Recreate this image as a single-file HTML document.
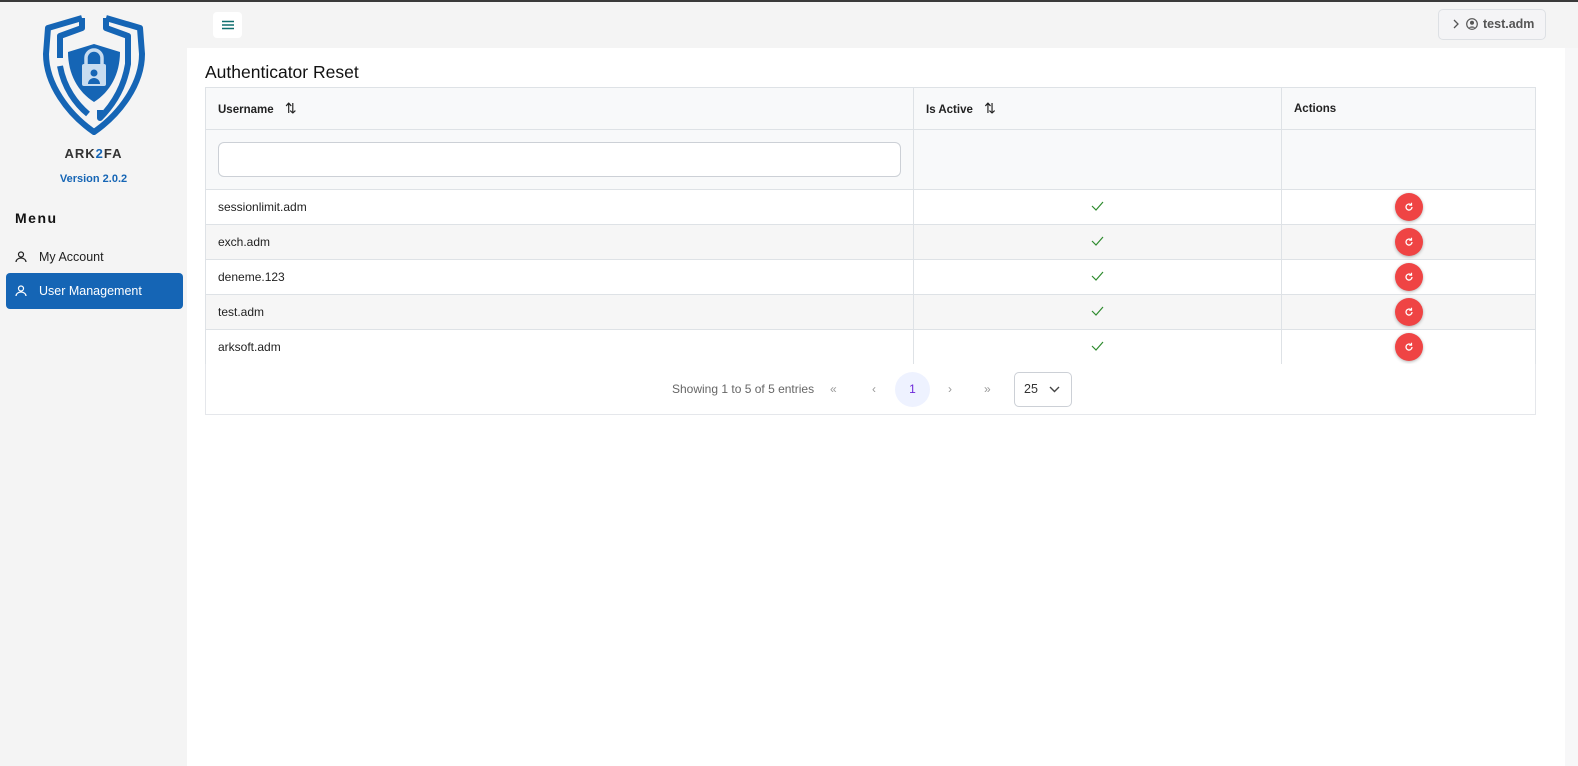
<!DOCTYPE html>
<html><head><meta charset="utf-8"><style>
*{box-sizing:border-box;margin:0;padding:0}
body{width:1578px;height:766px;overflow:hidden;background:#f4f4f4;font-family:"Liberation Sans",sans-serif;font-size:13px;color:#222;position:relative}
.topline{position:absolute;left:0;top:0;width:1578px;height:2px;background:#3a3a3a}
.side{position:absolute;left:0;top:2px;width:187px;height:764px;background:#f4f4f4}
.main{position:absolute;left:187px;top:48px;width:1378px;height:718px;background:#fff}
.rstripe{position:absolute;left:1565px;top:48px;width:13px;height:718px;background:#f7f7f8}
.menu-item{position:absolute;left:6px;width:177px;height:36px;border-radius:4px;display:flex;align-items:center;padding-left:9px;font-size:12.5px}
.menu-item svg{margin-right:12px}
table{position:absolute;left:205px;top:87px;width:1331px;border-collapse:collapse;font-size:12px}
td,th{border:1px solid #dee2e6;padding:0 12px;text-align:left}
th{background:#f8f9fa;height:42px;font-weight:bold;font-size:11.5px}
.filter td{background:#f8f9fa;height:60px}
.r td{height:35px;background:#fff}
.r:nth-child(even) td{background:#f6f6f6}
.c{text-align:center}
.btn{display:inline-block;width:28px;height:28px;border-radius:50%;background:#ef4444;vertical-align:middle;box-shadow:0 1px 3px rgba(0,0,0,.3);position:relative}
.btn svg{position:absolute;left:8px;top:8px}
.foot{position:absolute;left:205px;top:364px;width:1331px;height:51px;border:1px solid #e5e7eb;border-top:none;background:#fff}
.pg{position:absolute;top:8px;height:35px;line-height:35px;font-size:12px;color:#999}
</style></head><body>
<div class="topline"></div>
<div class="side">
<svg style="position:absolute;left:38px;top:12px" width="112" height="124" viewBox="0 0 112 124">
<g fill="none" stroke="#1565b5" stroke-width="6" stroke-linejoin="round">
<path d="M44 4 L10 14 L8 40 C8 70 30 100 56 118 C82 100 104 70 104 40 L102 14 L68 4"/>
<path d="M44 4 L44 14 L22 22 L22 44"/>
<path d="M68 4 L68 14 L90 22 L90 50 C86 74 74 92 62 104 L62 96"/>
<path d="M22 52 C26 74 38 90 50 100"/>
</g>
<path d="M30 38 L56 30 L82 38 C82 60 72 78 56 88 C40 78 30 60 30 38Z" fill="#1565b5"/>
<rect x="44" y="50" width="24" height="22" rx="2" fill="#c7dcf0"/>
<path d="M48 50 V44 a8 8 0 0 1 16 0 V50" fill="none" stroke="#c7dcf0" stroke-width="3.5"/>
<circle cx="56" cy="59" r="3.5" fill="#1565b5"/><path d="M50 70 a6 6 0 0 1 12 0z" fill="#1565b5"/>
</svg>
<div style="position:absolute;left:0;width:187px;top:144px;text-align:center;font-weight:bold;font-size:13px;letter-spacing:1px;color:#333">ARK<span style="color:#1565b5">2</span>FA</div>
<div style="position:absolute;left:0;width:187px;top:171px;text-align:center;font-weight:bold;font-size:11px;color:#1565b5">Version 2.0.2</div>
<div style="position:absolute;left:15px;top:208px;font-weight:bold;font-size:14px;letter-spacing:1.5px;color:#111">Menu</div>
<div class="menu-item" style="top:237px;color:#222"><svg width="12" height="12" viewBox="0 0 12 12" fill="none" stroke="#222" stroke-width="1.2"><circle cx="6" cy="3.5" r="2.5"/><path d="M1 11 a5 4 0 0 1 10 0"/></svg>My Account</div>
<div class="menu-item" style="top:271px;background:#1565b5;color:#fff"><svg width="12" height="12" viewBox="0 0 12 12" fill="none" stroke="#fff" stroke-width="1.2"><circle cx="6" cy="3.5" r="2.5"/><path d="M1 11 a5 4 0 0 1 10 0"/></svg>User Management</div>
</div>
<div style="position:absolute;left:213px;top:12px;width:29px;height:26px;background:#fff;border-radius:4px"><svg style="position:absolute;left:9px;top:8px" width="12" height="10"><path d="M0 1.5h12M0 5h12M0 8.5h12" stroke="#0f6e6e" stroke-width="1.4"/></svg></div>
<div style="position:absolute;left:1438px;top:9px;width:108px;height:31px;border:1px solid #dde0e4;border-radius:5px;background:#f4f4f6;font-weight:bold;font-size:12.5px;color:#555;line-height:29px;padding-left:14px">
<svg width="7" height="10" style="vertical-align:-1px;margin-right:6px"><path d="M1 1l4 4-4 4" fill="none" stroke="#555" stroke-width="1.3"/></svg><svg width="12" height="12" style="vertical-align:-2px;margin-right:5px" viewBox="0 0 12 12"><circle cx="6" cy="6" r="5.3" fill="none" stroke="#555" stroke-width="1.2"/><circle cx="6" cy="4.8" r="2" fill="#555"/><path d="M2.6 9.8a4 3 0 0 1 6.8 0" fill="#555"/></svg>test.adm</div>
<div class="main"></div>
<div class="rstripe"></div>
<div style="position:absolute;left:205px;top:62px;font-size:17.5px;color:#111">Authenticator Reset</div>
<table>
<tr><th style="width:708px">Username <span style="font-weight:normal;font-size:14px;margin-left:8px">⇅</span></th><th style="width:368px">Is Active <span style="font-weight:normal;font-size:14px;margin-left:8px">⇅</span></th><th>Actions</th></tr>
<tr class="filter"><td><div style="height:35px;border:1px solid #ccd0d6;border-radius:6px;background:#fff"></div></td><td></td><td></td></tr>
<tbody>
<tr class="r"><td>sessionlimit.adm</td><td class="c"><svg width="13" height="10"><path d="M1 5l4 4 7-8" fill="none" stroke="#2e8b2e" stroke-width="1.2"/></svg></td><td class="c"><span class="btn"><svg width="12" height="12" viewBox="0 0 12 12"><path d="M9 6a3 3 0 1 1-1-2.2" fill="none" stroke="#fff" stroke-width="1.3"/><path d="M8.5 1.8v2.4H6.2" fill="none" stroke="#fff" stroke-width="1.2"/></svg></span></td></tr>
<tr class="r"><td>exch.adm</td><td class="c"><svg width="13" height="10"><path d="M1 5l4 4 7-8" fill="none" stroke="#2e8b2e" stroke-width="1.2"/></svg></td><td class="c"><span class="btn"><svg width="12" height="12" viewBox="0 0 12 12"><path d="M9 6a3 3 0 1 1-1-2.2" fill="none" stroke="#fff" stroke-width="1.3"/><path d="M8.5 1.8v2.4H6.2" fill="none" stroke="#fff" stroke-width="1.2"/></svg></span></td></tr>
<tr class="r"><td>deneme.123</td><td class="c"><svg width="13" height="10"><path d="M1 5l4 4 7-8" fill="none" stroke="#2e8b2e" stroke-width="1.2"/></svg></td><td class="c"><span class="btn"><svg width="12" height="12" viewBox="0 0 12 12"><path d="M9 6a3 3 0 1 1-1-2.2" fill="none" stroke="#fff" stroke-width="1.3"/><path d="M8.5 1.8v2.4H6.2" fill="none" stroke="#fff" stroke-width="1.2"/></svg></span></td></tr>
<tr class="r"><td>test.adm</td><td class="c"><svg width="13" height="10"><path d="M1 5l4 4 7-8" fill="none" stroke="#2e8b2e" stroke-width="1.2"/></svg></td><td class="c"><span class="btn"><svg width="12" height="12" viewBox="0 0 12 12"><path d="M9 6a3 3 0 1 1-1-2.2" fill="none" stroke="#fff" stroke-width="1.3"/><path d="M8.5 1.8v2.4H6.2" fill="none" stroke="#fff" stroke-width="1.2"/></svg></span></td></tr>
<tr class="r"><td>arksoft.adm</td><td class="c"><svg width="13" height="10"><path d="M1 5l4 4 7-8" fill="none" stroke="#2e8b2e" stroke-width="1.2"/></svg></td><td class="c"><span class="btn"><svg width="12" height="12" viewBox="0 0 12 12"><path d="M9 6a3 3 0 1 1-1-2.2" fill="none" stroke="#fff" stroke-width="1.3"/><path d="M8.5 1.8v2.4H6.2" fill="none" stroke="#fff" stroke-width="1.2"/></svg></span></td></tr>
</tbody>
</table>
<div class="foot">
<div style="position:absolute;left:466px;top:18px;font-size:12px;color:#666">Showing 1 to 5 of 5 entries</div>
<div class="pg" style="left:624px">«</div>
<div class="pg" style="left:666px">‹</div>
<div style="position:absolute;left:689px;top:8px;width:35px;height:35px;border-radius:50%;background:#eef2ff;color:#6d28d9;text-align:center;line-height:35px;font-size:12px">1</div>
<div class="pg" style="left:742px">›</div>
<div class="pg" style="left:778px">»</div>
<div style="position:absolute;left:808px;top:8px;width:58px;height:35px;border:1px solid #ccd0d6;border-radius:5px;font-size:12.5px;color:#333;line-height:33px;padding-left:9px">25<svg width="11" height="7" style="position:absolute;left:34px;top:13px"><path d="M1 1l4.5 4.5L10 1" fill="none" stroke="#444" stroke-width="1.4"/></svg></div>
</div>
</body></html>
